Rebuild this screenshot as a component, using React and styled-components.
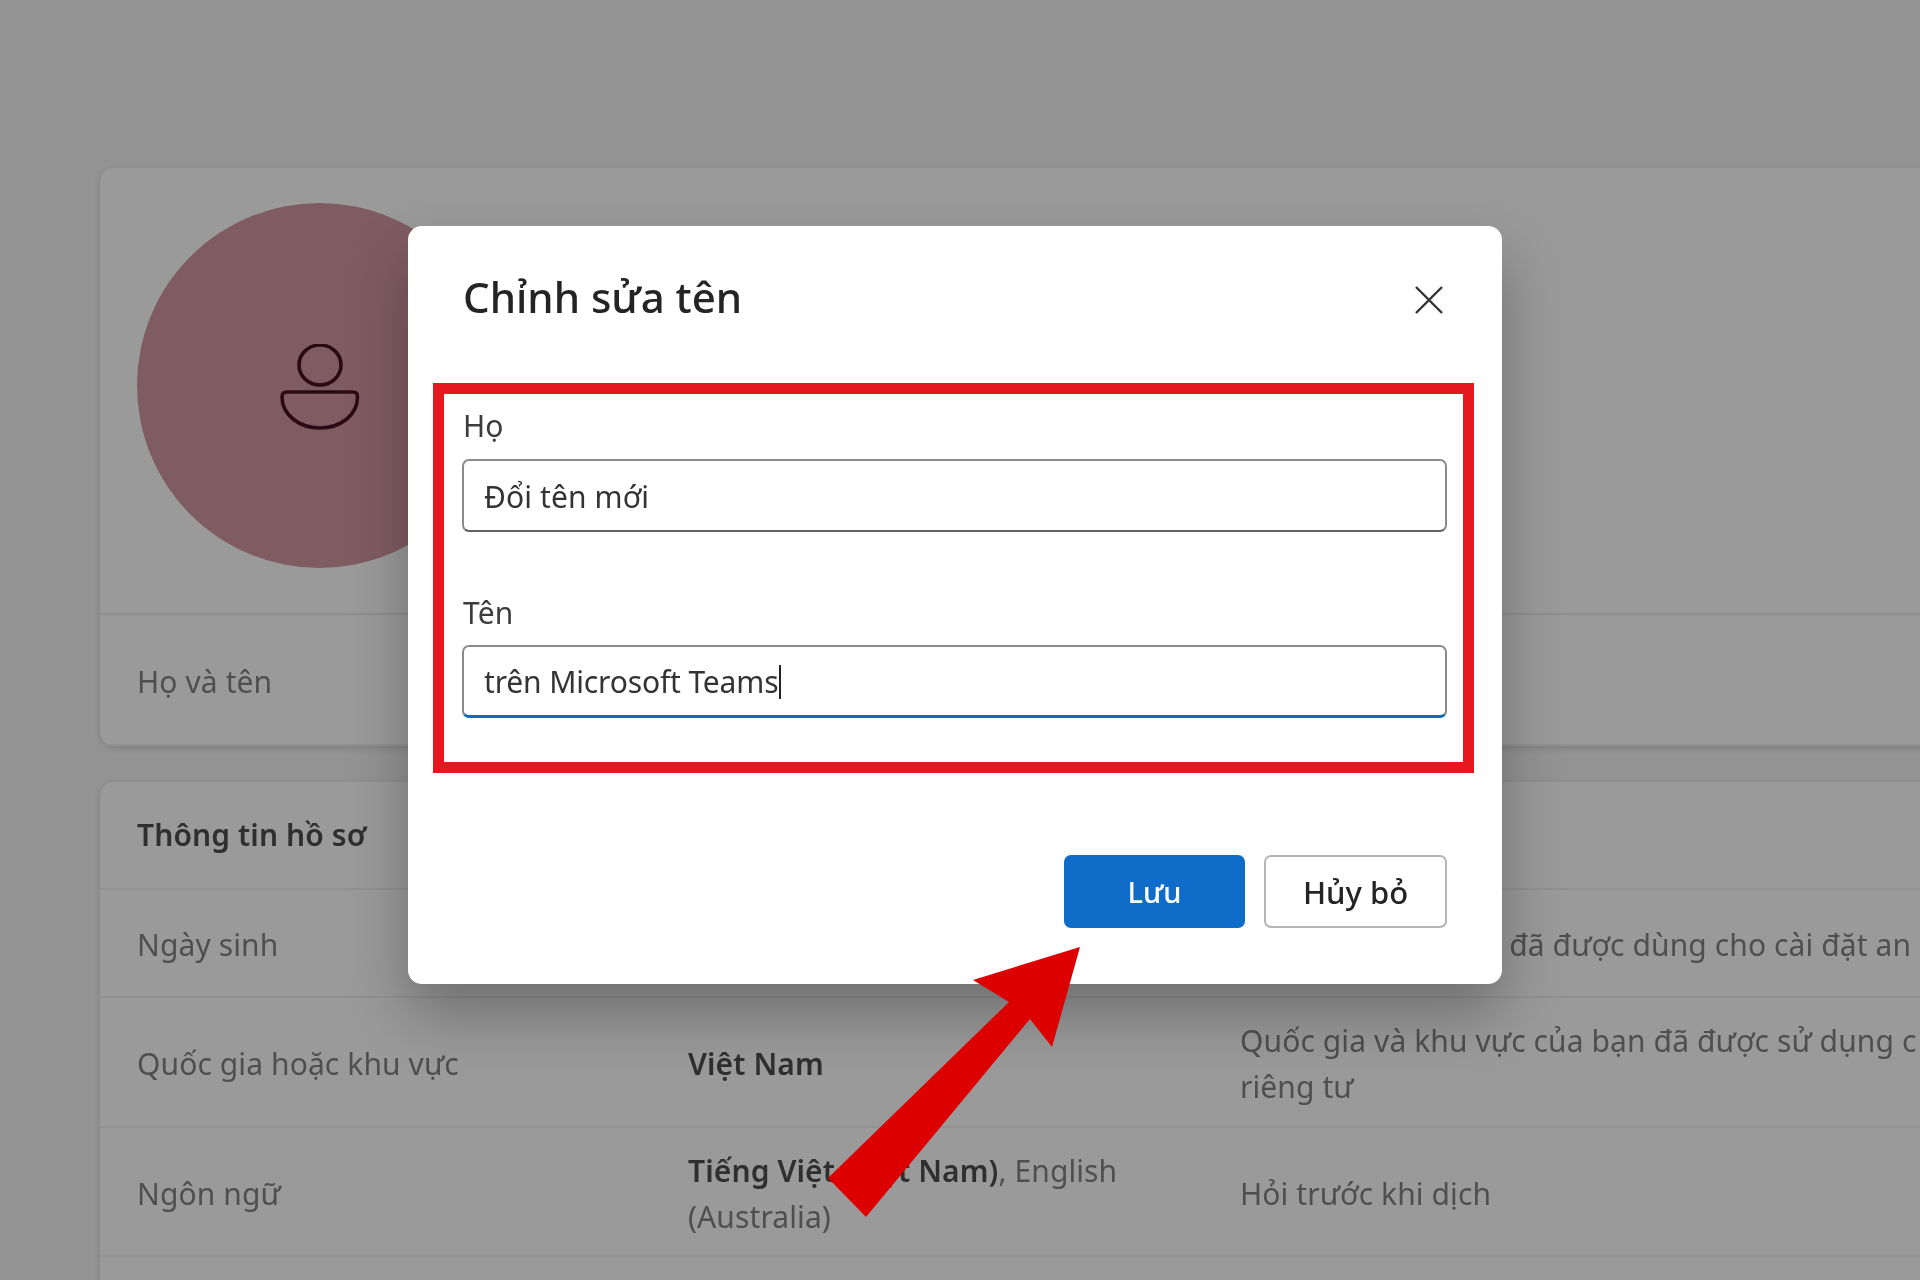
import React from 'react';
import styled, {createGlobalStyle} from 'styled-components';

const GlobalStyle = createGlobalStyle`
  html, body { margin: 0; padding: 0; background: #939393; }
  * { box-sizing: border-box; }
`;

const Page = styled.div`
  position: relative;
  width: 1920px;
  height: 1280px;
  overflow: hidden;
  padding: 168px 0 0 100px;
  background: #939393;
  font-family: "Noto Sans", "Open Sans", sans-serif;
  font-size: 30px;
  letter-spacing: 0.1px;
  color: #4f4f4f;
  filter: blur(0.5px);
`;

const Card = styled.section`
  width: 1900px;
  margin-bottom: 36px;
  background: #9a9a9a;
  border-radius: 14px;
  box-shadow: 0 2px 6px rgba(0, 0, 0, 0.14);
`;

const AvatarArea = styled.div`
  height: 447px;
  padding: 35px 37px;
  border-bottom: 2px solid #8e8e8e;
`;

const Avatar = styled.div`
  display: flex;
  align-items: center;
  justify-content: center;
  width: 365px;
  height: 365px;
  padding-top: 6px;
  border-radius: 50%;
  background: #7f5c62;
`;

const Row = styled.div`
  display: grid;
  grid-template-columns: 551px 552px 1fr;
  align-items: center;
  height: ${props => props.height}px;
  padding: ${props => props.heading ? '0' : '4px'} 0 0 37px;
  line-height: 46px;
  border-bottom: 2px solid #919191;
`;

const Strong = styled.span`
  font-weight: 600;
  color: #2f2f2f;
`;

const Sentence = styled.div`
  white-space: nowrap;
`;

const Backdrop = styled.div`
  position: absolute;
  left: 408px;
  top: 226px;
  width: 1094px;
  height: 758px;
  background: #fff;
  border-radius: 14px;
  box-shadow: 0 30px 60px 0 rgba(0, 0, 0, 0.28);
`;

const ModalHeader = styled.div`
  display: flex;
  align-items: center;
  justify-content: space-between;
  height: 157px;
  padding: 0 55px 16px;
`;

const Title = styled.h2`
  margin: 0;
  font-size: 42px;
  font-weight: 500;
  letter-spacing: 0;
  color: #242424;
`;

const CloseButton = styled.button`
  display: flex;
  padding: 0;
  margin-right: 2px;
  margin-top: 6px;
  border: none;
  background: none;
`;

const RedBox = styled.div`
  margin: 0 28px 0 25px;
  padding: 12px 16px 44px 18px;
  border: 11px solid #e5171f;
`;

const Label = styled.div`
  height: 40px;
  margin: ${props => props.second ? '61px 0 12px 1px' : '0 0 13px 1px'};
  line-height: 40px;
  color: #3c3c3c;
`;

const Field = styled.div`
  display: flex;
  align-items: center;
  height: 73px;
  padding: 1px 20px 0;
  border: 2px solid #8a8a8a;
  border-bottom-color: ${props => props.focused ? '#0f6cbd' : '#616161'};
  border-bottom-width: ${props => props.focused ? '3px' : '2px'};
  border-radius: 7px;
  letter-spacing: ${props => props.focused ? '-0.15px' : '0.1px'};
  color: #333;
`;

const Caret = styled.span`
  width: 2px;
  height: 34px;
  margin-left: 1px;
  background: #222;
`;

const Footer = styled.div`
  display: flex;
  justify-content: flex-end;
  gap: 19px;
  padding: 82px 55px 0;
`;

const ActionButton = styled.button`
  width: ${props => props.primary ? '181px' : '183px'};
  height: 73px;
  border: 2px solid ${props => props.primary ? '#0f6cc8' : '#b5b5b5'};
  border-radius: 7px;
  background: ${props => props.primary ? '#0f6cc8' : '#fff'};
  color: ${props => props.primary ? '#fff' : '#242424'};
  font-family: inherit;
  font-size: ${props => props.primary ? '29px' : '31px'};
  font-weight: 500;
`;

const ArrowLayer = styled.svg`
  position: absolute;
  left: 0;
  top: 0;
`;

const PersonIcon = () => (
  <svg width="82" height="90" viewBox="0 0 82 90" fill="none" stroke="#2a0a14" strokeWidth="3.6">
    <ellipse cx="41" cy="21" rx="21" ry="20" />
    <path d="M8 48h66c3 0 4.5 2 4.5 5 0 18-17 31-37.5 31S3 71 3 53c0-3 1.5-5 5-5z" />
  </svg>
);

const CloseIcon = () => (
  <svg width="32" height="32" viewBox="0 0 32 32" fill="none" stroke="#333" strokeWidth="2.4">
    <path d="M3 3l26 26M29 3L3 29" />
  </svg>
);

export default function App() {
  return (
    <Page>
      <GlobalStyle />
      <Card>
        <AvatarArea>
          <Avatar><PersonIcon /></Avatar>
        </AvatarArea>
        <Row height={131}>
          <div>Họ và tên</div>
        </Row>
      </Card>
      <Card>
        <Row height={108} heading>
          <Strong>Thông tin hồ sơ</Strong>
        </Row>
        <Row height={108}>
          <div>Ngày sinh</div>
          <div />
          <Sentence>Ngày sinh của bạn đã được dùng cho cài đặt an</Sentence>
        </Row>
        <Row height={130}>
          <div>Quốc gia hoặc khu vực</div>
          <Strong>Việt Nam</Strong>
          <Sentence>Quốc gia và khu vực của bạn đã được sử dụng c<br />riêng tư</Sentence>
        </Row>
        <Row height={129}>
          <div>Ngôn ngữ</div>
          <div><Strong>Tiếng Việt (Việt Nam)</Strong>, English<br />(Australia)</div>
          <div>Hỏi trước khi dịch</div>
        </Row>
        <Row height={120} />
      </Card>

      <Backdrop>
        <ModalHeader>
          <Title>Chỉnh sửa tên</Title>
          <CloseButton><CloseIcon /></CloseButton>
        </ModalHeader>
        <RedBox>
          <Label>Họ</Label>
          <Field>Đổi tên mới</Field>
          <Label second>Tên</Label>
          <Field focused>trên Microsoft Teams<Caret /></Field>
        </RedBox>
        <Footer>
          <ActionButton primary>Lưu</ActionButton>
          <ActionButton>Hủy bỏ</ActionButton>
        </Footer>
      </Backdrop>

      <ArrowLayer width="1920" height="1280">
        <polygon points="1080,947 973,980 1009,1002 828,1178 866,1217 1030,1019 1052,1047" fill="#dd0000" />
      </ArrowLayer>
    </Page>
  );
}
